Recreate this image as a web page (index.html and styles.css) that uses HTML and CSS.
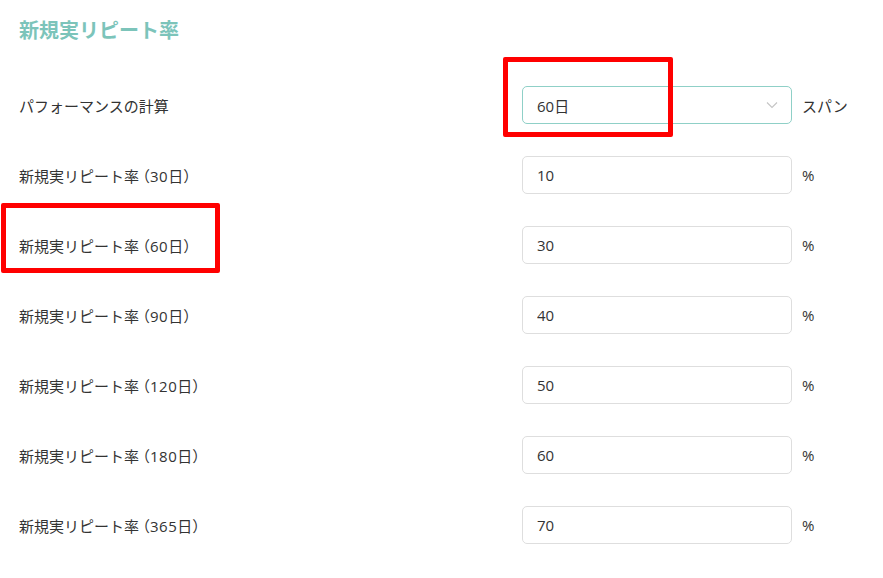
FILE: index.html
```html
<!doctype html>
<html>
  <head>
    <meta charset="utf-8" />
    <title>新規実リピート率</title>
    <meta name="viewport" content="width=device-width" />
    <link rel="stylesheet" href="styles.css">
  </head>
  <body>
    <div class="page">
      <h2 class="title">新規実リピート率</h2>

      <div class="form">
        <div class="row">
          <label class="label">パフォーマンスの計算</label>
          <div class="select">
            <span>60日</span>
            <svg class="chevron" width="12" height="8" viewBox="0 0 12 8">
              <path d="M1 1.5 L6 6.5 L11 1.5" fill="none" stroke="#c4c4c4" stroke-width="1.1" />
            </svg>
          </div>
          <span class="suffix">スパン</span>
        </div>

        <div class="row">
          <label class="label">新規実リピート率<span class="span-days">（30日）</span></label>
          <input class="input" type="text" value="10" />
          <span class="suffix">%</span>
        </div>

        <div class="row">
          <label class="label">新規実リピート率<span class="span-days">（60日）</span></label>
          <input class="input" type="text" value="30" />
          <span class="suffix">%</span>
        </div>

        <div class="row">
          <label class="label">新規実リピート率<span class="span-days">（90日）</span></label>
          <input class="input" type="text" value="40" />
          <span class="suffix">%</span>
        </div>

        <div class="row">
          <label class="label">新規実リピート率<span class="span-days">（120日）</span></label>
          <input class="input" type="text" value="50" />
          <span class="suffix">%</span>
        </div>

        <div class="row">
          <label class="label">新規実リピート率<span class="span-days">（180日）</span></label>
          <input class="input" type="text" value="60" />
          <span class="suffix">%</span>
        </div>

        <div class="row">
          <label class="label">新規実リピート率<span class="span-days">（365日）</span></label>
          <input class="input" type="text" value="70" />
          <span class="suffix">%</span>
        </div>
      </div>

      <div class="mark mark-select"></div>
      <div class="mark mark-label"></div>
    </div>
  </body>
</html>
```

FILE: styles.css
```css
body {
  margin: 0;
  background: #fff;
  font-family: "Open Sans", "Noto Sans CJK JP", sans-serif;
  color: #333;
}
.page {
  position: relative;
  padding: 18px 0 0 19px;
}
.title {
  margin: 0;
  font-size: 20px;
  line-height: 26px;
  font-weight: 700;
  color: #7cc4ba;
}
.form {
  display: flex;
  flex-direction: column;
  gap: 32px;
  margin-top: 42px;
}
.row {
  display: grid;
  grid-template-columns: 491px 270px auto;
  column-gap: 12px;
  align-items: center;
  height: 38px;
}
.label {
  font-size: 15px;
  color: #333;
}
.span-days {
  font-feature-settings: "palt";
  letter-spacing: 0.5px;
  padding-left: 3px;
}
.input,
.select {
  box-sizing: border-box;
  height: 38px;
  width: 270px;
  border: 1px solid #dedede;
  border-radius: 5px;
  padding: 0 14px;
  font-family: inherit;
  font-size: 15px;
  color: #333;
  background: #fff;
  outline: none;
}
.select {
  display: flex;
  align-items: center;
  justify-content: space-between;
  border-color: #8fd0c7;
  padding-right: 13px;
}
.suffix {
  font-size: 15px;
  color: #333;
  margin-left: -2px;
}
.mark {
  position: absolute;
  box-sizing: border-box;
  border: 5px solid #ff0000;
  border-radius: 2px;
}
.mark-select {
  left: 503px;
  top: 57px;
  width: 170px;
  height: 80px;
}
.mark-label {
  left: 1px;
  top: 203px;
  width: 219px;
  height: 70px;
}
```
